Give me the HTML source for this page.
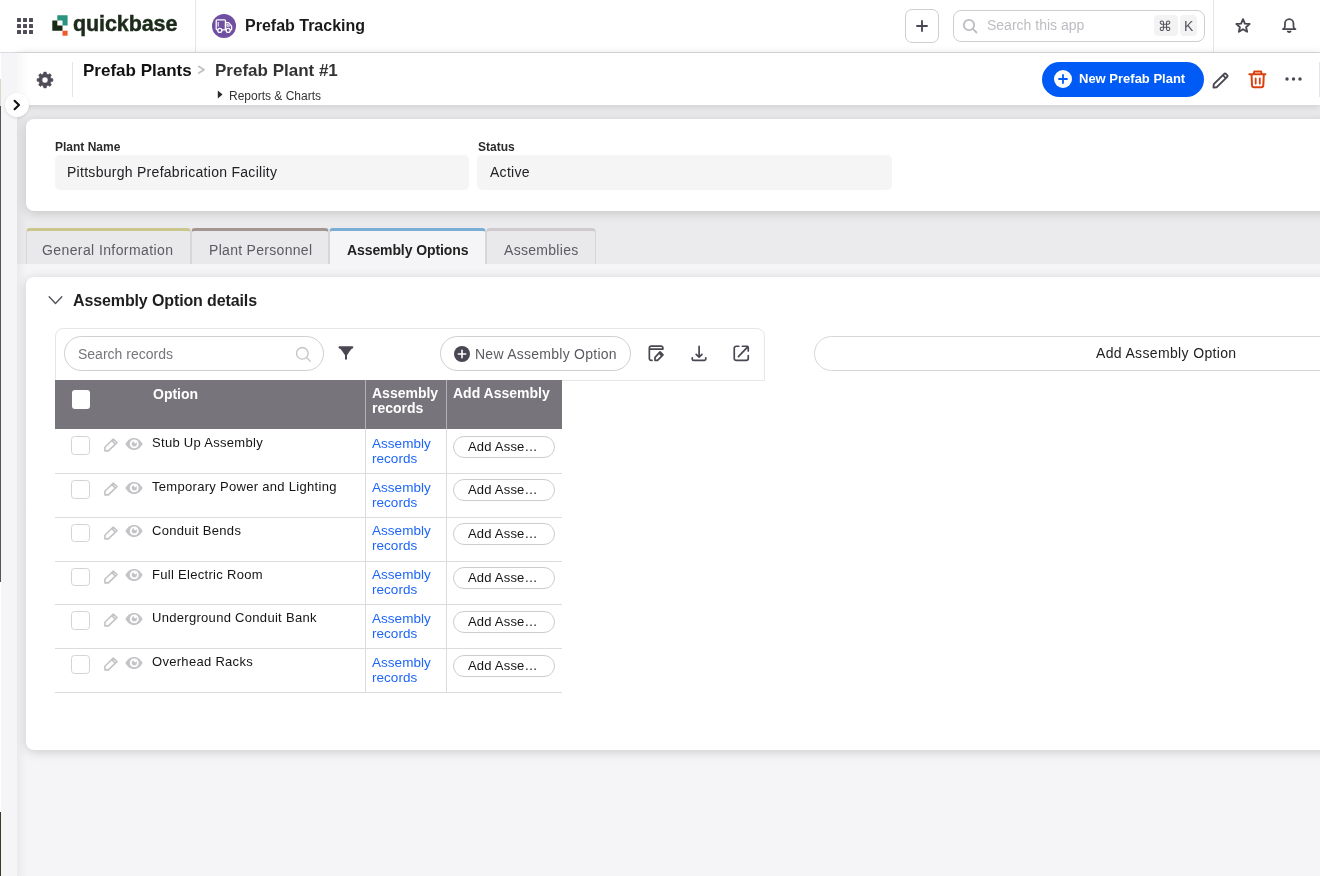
<!DOCTYPE html>
<html><head><meta charset="utf-8">
<style>
*{box-sizing:border-box;margin:0;padding:0}
html,body{width:1320px;height:876px;overflow:hidden}
body{position:relative;background:#f5f5f8;font-family:"Liberation Sans",sans-serif;color:#222}
.a{position:absolute}
.t{position:absolute;white-space:nowrap;line-height:1;will-change:transform}
#top{left:0;top:0;width:1320px;height:53px;background:#fff;border-bottom:1px solid #dcdce0}
#side{left:0;top:53px;width:17px;height:823px;background:#f5f5f8;border-left:1px solid #fff}
#shade{left:17px;top:105px;width:10px;height:771px;background:linear-gradient(to right,rgba(0,0,0,.045),rgba(0,0,0,0))}
#hdr{left:17px;top:53px;width:1303px;height:52.3px;background:#fff;box-shadow:0 1px 8px rgba(0,0,0,.16)}
#upper{left:17px;top:105px;width:1303px;height:159px;background:#ebebed}
.card{background:#fff;border-radius:8px;box-shadow:0 2px 11px rgba(0,0,0,.17)}
.tab{top:228px;height:36px;background:#e9e9eb;border-top:3px solid;border-left:1px solid #d6d6da;border-right:1px solid #d6d6da;border-radius:4px 4px 0 0}
.tab.act{background:#f5f5f7}
.cb{left:71px;width:18.5px;height:18.5px;border:1px solid #d4d4d8;border-radius:3.5px;background:#fff}
.pen{left:103px;width:16px;height:16px}
.eye{left:125px;width:18px;height:12px}
.rt{left:152.3px;font-size:13px;letter-spacing:.3px;color:#151515}
.lk{left:372.4px;font-size:13.5px;letter-spacing:.03px;line-height:14.6px;color:#1d66f7}
.btn{left:452.8px;width:102px;height:22px;border:1px solid #cdcdd1;border-radius:12px;background:#fff}
.bt{left:468px;font-size:13px;letter-spacing:.2px;color:#151515}
</style></head>
<body>
<!-- upper gray band -->
<div class="a" id="upper"></div>
<div class="a" id="shade"></div>

<!-- top bar -->
<div class="a" id="top">
  <!-- grid -->
  <svg class="a" style="left:17px;top:18px" width="16" height="16" viewBox="0 0 16 16" fill="#504c58">
    <rect x="0" y="0" width="4" height="4" rx=".5"/><rect x="6" y="0" width="4" height="4" rx=".5"/><rect x="12" y="0" width="4" height="4" rx=".5"/>
    <rect x="0" y="6" width="4" height="4" rx=".5"/><rect x="6" y="6" width="4" height="4" rx=".5"/><rect x="12" y="6" width="4" height="4" rx=".5"/>
    <rect x="0" y="12" width="4" height="4" rx=".5"/><rect x="6" y="12" width="4" height="4" rx=".5"/><rect x="12" y="12" width="4" height="4" rx=".5"/>
  </svg>
  <!-- logo -->
  <svg class="a" style="left:52px;top:15px" width="16" height="21" viewBox="0 0 16 21">
    <path d="M5.3 0.3H15.6V10.6H10.5V5.5H5.3Z" fill="#2a9480"/>
    <path d="M0.3 5.5H5.3V10.6H10.5V15.7H0.3Z" fill="#1b2a17"/>
    <rect x="10.5" y="15.7" width="5.1" height="5" fill="#f05a28"/>
  </svg>
  <div class="t" style="left:73px;top:14px;font-size:21.5px;font-weight:700;color:#1c2b1a;letter-spacing:-.1px;-webkit-text-stroke:.45px #1c2b1a">quickbase</div>
  <div class="a" style="left:195px;top:0;width:1px;height:52px;background:#e6e6e8"></div>
  <!-- app icon -->
  <svg class="a" style="left:212px;top:13.8px" width="24" height="24" viewBox="0 0 24 24"><circle cx="12" cy="12" r="12" fill="#6f4fa0"/>
  <g fill="none" stroke="#fff" stroke-width="1.3" stroke-linejoin="round"><rect x="4.2" y="5.8" width="9.3" height="10" rx="1"/><path d="M6.2 8V12.5" stroke-width="1"/><path d="M13.5 8.6H16.6L19.6 12.2V15.8H13.5Z"/><path d="M15 10.3H16.1L17.6 12.2H15Z" stroke-width=".9"/></g>
  <g fill="#6f4fa0" stroke="#fff" stroke-width="1.3"><circle cx="7.8" cy="16.4" r="2"/><circle cx="16.2" cy="16.4" r="2"/></g></svg>
  <div class="t" style="left:244.5px;top:18px;font-size:16px;font-weight:700;color:#1a1a1a">Prefab Tracking</div>
  <!-- plus button -->
  <div class="a" style="left:904.5px;top:9px;width:34px;height:34px;border:1px solid #cfcfd3;border-radius:7px"></div>
  <!-- search -->
  <div class="a" style="left:953px;top:10px;width:252px;height:32px;border:1px solid #cfcfd3;border-radius:8px"></div>
  <div class="t" style="left:986.5px;top:18.3px;font-size:14px;color:#bdbcc2">Search this app</div>
  <svg class="a" style="left:914px;top:18px" width="16" height="16" viewBox="0 0 16 16"><path d="M8 3V13M3 8H13" stroke="#4a4652" stroke-width="1.85" stroke-linecap="round"/></svg>
  <svg class="a" style="left:962px;top:18px" width="16" height="16" viewBox="0 0 16 16" fill="none" stroke="#bdbcc2" stroke-width="1.8" stroke-linecap="round"><circle cx="7" cy="7" r="5.2"/><path d="M10.8 10.8L14.5 14.5"/></svg>
  <div class="a" style="left:1153.5px;top:15px;width:24px;height:21px;border-radius:4px;background:#f3f3f4"></div>
  <div class="a" style="left:1180px;top:15px;width:16.5px;height:21px;border-radius:4px;background:#f3f3f4"></div>
  <div class="t" style="left:1158px;top:19px;font-size:14px;color:#55535b">&#8984;</div>
  <div class="t" style="left:1183.5px;top:19px;font-size:14px;color:#55535b">K</div>
  <div class="a" style="left:1213px;top:0;width:1px;height:52px;background:#e6e6e8"></div>
  <svg class="a" style="left:1234px;top:17px" width="18" height="18" viewBox="0 0 18 18"><path d="M9 2.2L10.9 6.6L15.6 7L12.1 10.1L13.1 14.8L9 12.3L4.9 14.8L5.9 10.1L2.4 7L7.1 6.6Z" fill="none" stroke="#4a4652" stroke-width="1.9" stroke-linejoin="round"/></svg>
  <svg class="a" style="left:1280px;top:16.3px" width="18" height="18" viewBox="0 0 18 18" fill="none" stroke="#4a4652" stroke-width="1.75" stroke-linecap="round" stroke-linejoin="round"><path d="M2.9 13.1H15.5M3.4 13.1Q4.95 12.4 4.95 10V7.4A4.25 4.25 0 0 1 13.45 7.4V10Q13.45 12.4 15 13.1"/><path d="M7.9 15.6Q9.2 16.6 10.5 15.6" stroke-width="1.9"/></svg>
</div>

<!-- sidebar -->


<!-- page header -->
<div class="a" id="hdr">
  <svg class="a" style="left:17.8px;top:16.6px" width="20" height="20" viewBox="0 0 20 20"><path fill="#4f4b57" fill-rule="evenodd" stroke="#4f4b57" stroke-width=".6" stroke-linejoin="round" d="M8.40 4.00 L8.85 2.10 L11.15 2.10 L11.60 4.00 A6.00 6.00 0 0 1 13.11 4.63 L14.77 3.60 L16.40 5.23 L15.37 6.89 A6.00 6.00 0 0 1 16.00 8.40 L17.90 8.85 L17.90 11.15 L16.00 11.60 A6.00 6.00 0 0 1 15.37 13.11 L16.40 14.77 L14.77 16.40 L13.11 15.37 A6.00 6.00 0 0 1 11.60 16.00 L11.15 17.90 L8.85 17.90 L8.40 16.00 A6.00 6.00 0 0 1 6.89 15.37 L5.23 16.40 L3.60 14.77 L4.63 13.11 A6.00 6.00 0 0 1 4.00 11.60 L2.10 11.15 L2.10 8.85 L4.00 8.40 A6.00 6.00 0 0 1 4.63 6.89 L3.60 5.23 L5.23 3.60 L6.89 4.63 A6.00 6.00 0 0 1 8.40 4.00 Z M13.10 10.00 A3.10 3.10 0 1 0 6.90 10.00 A3.10 3.10 0 1 0 13.10 10.00 Z"/></svg>
  <div class="a" style="left:55px;top:9px;width:1px;height:35px;background:#e4e4e7"></div>
  <div class="t" style="left:65.5px;top:9px;font-size:17px;font-weight:700;color:#111">Prefab Plants</div>
  <svg class="a" style="left:180px;top:12px" width="10" height="10" viewBox="0 0 10 10"><path d="M1.8 1.5L7 4.7L1.8 8" fill="none" stroke="#c2c2c4" stroke-width="1.9" stroke-linecap="round" stroke-linejoin="round"/></svg>
  <div class="t" style="left:198px;top:9px;font-size:17px;font-weight:700;color:#333">Prefab Plant #1</div>
  <svg class="a" style="left:200px;top:37px" width="6" height="9" viewBox="0 0 6 9"><path d="M0.8 0.5L5.5 4.5L0.8 8.5Z" fill="#2a2a2a"/></svg>
  <div class="t" style="left:211.5px;top:36.5px;font-size:12px;color:#333">Reports &amp; Charts</div>
  <!-- new button -->
  <div class="a" style="left:1025px;top:9px;width:162px;height:34.5px;border-radius:18px;background:#005bf6"></div>
  <svg class="a" style="left:1037px;top:17.3px" width="18" height="18" viewBox="0 0 18 18"><circle cx="9" cy="9" r="9" fill="#fff"/><path d="M9 5V13M5 9H13" stroke="#005bf6" stroke-width="1.8" stroke-linecap="round"/></svg>
  <div class="t" style="left:1062px;top:18.5px;font-size:13px;font-weight:700;color:#fff">New Prefab Plant</div>
  <!-- pencil -->
  <svg class="a" style="left:1194px;top:16.5px" width="20" height="20" viewBox="0 0 20 20" fill="none" stroke="#4a4652" stroke-width="1.9" stroke-linejoin="round"><path d="M2.5 17.5L2.8 14.2L13.2 3.8A1.2 1.2 0 0 1 14.9 3.8L16.2 5.1A1.2 1.2 0 0 1 16.2 6.8L5.8 17.2Z"/><path d="M11.8 5.2L14.8 8.2"/></svg>
  <!-- trash -->
  <svg class="a" style="left:1231px;top:15.5px" width="20" height="20" viewBox="0 0 20 20" fill="none" stroke="#d9420f" stroke-width="2" stroke-linecap="round" stroke-linejoin="round"><path d="M1.3 5.3H17.4M5.6 5.3L6.3 2.4H13.1L13.8 5.3M3.5 5.3L4 16.3Q4.1 18.3 6 18.3H13.3Q15.2 18.3 15.3 16.3L15.8 5.3"/><path d="M7.7 9.3V14.7M11.8 9.3V14.7" stroke-width="1.8"/></svg>
  <!-- dots -->
  <svg class="a" style="left:1268px;top:24px" width="18" height="4" viewBox="0 0 18 4" fill="#4a4652"><circle cx="2" cy="2" r="1.7"/><circle cx="8.5" cy="2" r="1.7"/><circle cx="15" cy="2" r="1.7"/></svg>
  <div class="a" style="left:1302px;top:8.5px;width:1px;height:35px;background:#e4e4e7"></div>
</div>

<div class="a" id="side"></div>
<div class="a" style="left:0;top:79px;width:1px;height:27px;background:#d9d5ca"></div>
<div class="a" style="left:0;top:106px;width:1px;height:476px;background:#555"></div>
<div class="a" style="left:0;top:812px;width:1px;height:64px;background:#3b3a26"></div>
<div class="a" style="left:17px;top:53px;width:12px;height:52px;background:linear-gradient(to right,rgba(0,0,0,.03),rgba(0,0,0,0))"></div>
<!-- card 1 -->
<div class="a card" style="left:26px;top:119px;width:1320px;height:92px"></div>
<div class="t" style="left:55px;top:140.7px;font-size:12px;font-weight:700;color:#2b2b2b">Plant Name</div>
<div class="a" style="left:54.5px;top:155px;width:414.5px;height:35px;border-radius:5px;background:#f5f5f5"></div>
<div class="t" style="left:67px;top:165px;font-size:14px;letter-spacing:.28px;color:#222226">Pittsburgh Prefabrication Facility</div>
<div class="t" style="left:477.5px;top:140.7px;font-size:12px;font-weight:700;color:#2b2b2b">Status</div>
<div class="a" style="left:477px;top:155px;width:415px;height:35px;border-radius:5px;background:#f5f5f5"></div>
<div class="t" style="left:489.5px;top:165px;font-size:14px;letter-spacing:.28px;color:#222226">Active</div>

<!-- tabs -->
<div class="a tab" style="left:26px;width:165px;border-top-color:#c9c78c"></div>
<div class="a tab" style="left:191px;width:138px;border-top-color:#a39592"></div>
<div class="a tab act" style="left:329px;width:157px;border-top-color:#7aaed4"></div>
<div class="a tab" style="left:486px;width:110px;border-top-color:#d0cacc"></div>
<div class="t" style="left:42.3px;top:243.3px;font-size:14px;letter-spacing:.4px;color:#5c5a62">General Information</div>
<div class="t" style="left:208.5px;top:243.3px;font-size:14px;letter-spacing:.3px;color:#5c5a62">Plant Personnel</div>
<div class="t" style="left:346.8px;top:243.3px;font-size:14px;font-weight:700;letter-spacing:-.1px;color:#222">Assembly Options</div>
<div class="t" style="left:503.6px;top:243.3px;font-size:14px;letter-spacing:.3px;color:#5c5a62">Assemblies</div>

<!-- card 2 -->
<div class="a card" style="left:26px;top:277px;width:1320px;height:473px"></div>
<svg class="a" style="left:48px;top:295px" width="15" height="10" viewBox="0 0 15 10"><path d="M1.2 1.8L7.5 8.5L13.8 1.8" fill="none" stroke="#55535b" stroke-width="1.4" stroke-linecap="round" stroke-linejoin="round"/></svg>
<div class="t" style="left:73px;top:293px;font-size:16px;font-weight:700;letter-spacing:-.12px;color:#1e1e1e">Assembly Option details</div>

<!-- toolbar container -->
<div class="a" style="left:54.5px;top:327.5px;width:710.5px;height:53px;border:1px solid #e6e6e8;border-radius:8px 8px 0 0"></div>
<div class="a" style="left:64.4px;top:336.4px;width:259.6px;height:35px;border:1px solid #cfcfd3;border-radius:18px"></div>
<div class="t" style="left:77.7px;top:346.5px;font-size:14px;color:#77757c">Search records</div>
<svg class="a" style="left:295px;top:346px" width="17" height="17" viewBox="0 0 17 17" fill="none" stroke="#c4c4c8" stroke-width="1.3" stroke-linecap="round"><circle cx="7.3" cy="7.3" r="5.8"/><path d="M11.5 11.5L15.3 15.3"/></svg>
<svg class="a" style="left:338px;top:345.5px" width="16" height="15" viewBox="0 0 16 15"><path d="M0.5 1.2Q0.5 0.3 1.4 0.3H14.4Q15.3 0.3 15.3 1.2Q15.3 2 14.5 2.5L13.4 3.1Q11 6.2 9 9.3V13Q9 13.7 8 13.7Q7 13.7 7 13V9.3Q5 6.2 2.5 3.1L1.3 2.5Q0.5 2 0.5 1.2Z" fill="#4a4652"/></svg>
<div class="a" style="left:440.3px;top:336.2px;width:190.4px;height:35px;border:1px solid #cfcfd3;border-radius:18px"></div>
<svg class="a" style="left:453.8px;top:346px" width="16" height="16" viewBox="0 0 16 16"><circle cx="8" cy="8" r="8" fill="#4a4652"/><path d="M8 4.3V11.7M4.3 8H11.7" stroke="#fff" stroke-width="1.6" stroke-linecap="round"/></svg>
<div class="t" style="left:475.4px;top:347px;font-size:14px;letter-spacing:.26px;color:#5c5a62">New Assembly Option</div>
<svg class="a" style="left:647px;top:345.3px" width="18" height="18" viewBox="0 0 18 18" fill="none" stroke="#4a4652" stroke-width="1.7" stroke-linecap="round" stroke-linejoin="round"><path d="M5 15.35H4.2A1.85 1.85 0 0 1 2.35 13.5V3A1.85 1.85 0 0 1 4.2 1.15H14A1.85 1.85 0 0 1 15.85 3V4.15H2.35"/><path d="M8 15.35V12.4L13.1 6.9L16 9.8L10.5 15.35Z M12 8L14.9 10.9"/></svg>
<svg class="a" style="left:690px;top:345.4px" width="18" height="18" viewBox="0 0 18 18" fill="none" stroke="#4a4652" stroke-width="1.7" stroke-linecap="round" stroke-linejoin="round"><path d="M9.1 1.4V12M6.2 9.3L9.1 12.2L12 9.3M2.25 12.8V13.9A1.55 1.55 0 0 0 3.8 15.45H14.2A1.55 1.55 0 0 0 15.75 13.9V12.8"/></svg>
<svg class="a" style="left:732px;top:345.4px" width="18" height="18" viewBox="0 0 18 18" fill="none" stroke="#4a4652" stroke-width="1.7" stroke-linecap="round" stroke-linejoin="round"><path d="M6.8 1.25H4.2A1.95 1.95 0 0 0 2.25 3.2V13.5A1.95 1.95 0 0 0 4.2 15.45H14.3A1.95 1.95 0 0 0 16.25 13.5V10.7M10.4 1.25H15A1.25 1.25 0 0 1 16.25 2.5V5.9M15.9 1.6L6.4 11.6"/></svg>

<!-- wide add button -->
<div class="a" style="left:813.5px;top:335.5px;width:706px;height:35.7px;border:1px solid #d8d8dc;border-radius:18px"></div>
<div class="t" style="left:1096.4px;top:346.3px;font-size:14px;letter-spacing:.35px;color:#222">Add Assembly Option</div>

<!-- table -->
<div class="a" style="left:54.5px;top:380px;width:507.5px;height:49px;background:#78747c"></div>
<div class="a" style="left:365px;top:380px;width:1px;height:49px;background:#b3b0b7"></div>
<div class="a" style="left:446px;top:380px;width:1px;height:49px;background:#b3b0b7"></div>
<div class="a" style="left:72px;top:390px;width:18px;height:18.5px;border-radius:3px;background:#fff"></div>
<div class="t" style="left:152.8px;top:386.5px;font-size:14px;font-weight:700;color:#fff">Option</div>
<div class="t" style="left:371.7px;top:386.4px;font-size:14px;font-weight:700;color:#fff;line-height:15.3px;white-space:normal;width:70px">Assembly records</div>
<div class="t" style="left:453.3px;top:386.4px;font-size:14px;font-weight:700;color:#fff">Add Assembly</div>
<svg width="0" height="0" style="position:absolute"><defs>
<symbol id="pen" viewBox="0 0 16 16"><path d="M1.9 13.9V10.3L10.3 2L14 5.6L5.4 13.9Z M8.8 3.6L12.4 7.1" fill="none" stroke="#c4c4c8" stroke-width="1.6" stroke-linejoin="round"/></symbol>
<symbol id="eye" viewBox="0 0 18 12"><path d="M0.3 6C3 1.5 6 0 9 0S15 1.5 17.7 6C15 10.5 12 12 9 12S3 10.5 0.3 6Z" fill="#c4c4c8"/><circle cx="9.25" cy="5.9" r="4.45" fill="#fff"/><circle cx="9.3" cy="5.8" r="2.6" fill="#c4c4c8"/><circle cx="10.1" cy="4.1" r="1.25" fill="#fff"/></symbol>
</defs></svg>
<!--ROWS-->
<div class="a" style="left:365px;top:429px;width:1px;height:264px;background:#dcdcde"></div>
<div class="a" style="left:446px;top:429px;width:1px;height:264px;background:#dcdcde"></div>
<div class="a" style="left:54.5px;top:473.00px;width:507.5px;height:1px;background:#dcdcde"></div>
<div class="a cb" style="top:436.20px"></div>
<svg class="a pen" style="margin-top:-.2px;top:437.30px"><use href="#pen"/></svg>
<svg class="a eye" style="margin-top:-.6px;top:438.30px"><use href="#eye"/></svg>
<div class="t rt" style="top:436.10px">Stub Up Assembly</div>
<div class="t lk" style="top:436.70px">Assembly<br>records</div>
<div class="a btn" style="top:435.50px"></div>
<div class="t bt" style="top:439.50px">Add Asse&#8230;</div>
<div class="a" style="left:54.5px;top:516.78px;width:507.5px;height:1px;background:#dcdcde"></div>
<div class="a cb" style="top:480.00px"></div>
<svg class="a pen" style="margin-top:-.2px;top:481.10px"><use href="#pen"/></svg>
<svg class="a eye" style="margin-top:-.6px;top:482.10px"><use href="#eye"/></svg>
<div class="t rt" style="top:479.90px">Temporary Power and Lighting</div>
<div class="t lk" style="top:480.50px">Assembly<br>records</div>
<div class="a btn" style="top:479.30px"></div>
<div class="t bt" style="top:483.30px">Add Asse&#8230;</div>
<div class="a" style="left:54.5px;top:560.56px;width:507.5px;height:1px;background:#dcdcde"></div>
<div class="a cb" style="top:523.80px"></div>
<svg class="a pen" style="margin-top:-.2px;top:524.90px"><use href="#pen"/></svg>
<svg class="a eye" style="margin-top:-.6px;top:525.90px"><use href="#eye"/></svg>
<div class="t rt" style="top:523.70px">Conduit Bends</div>
<div class="t lk" style="top:524.30px">Assembly<br>records</div>
<div class="a btn" style="top:523.10px"></div>
<div class="t bt" style="top:527.10px">Add Asse&#8230;</div>
<div class="a" style="left:54.5px;top:604.34px;width:507.5px;height:1px;background:#dcdcde"></div>
<div class="a cb" style="top:567.60px"></div>
<svg class="a pen" style="margin-top:-.2px;top:568.70px"><use href="#pen"/></svg>
<svg class="a eye" style="margin-top:-.6px;top:569.70px"><use href="#eye"/></svg>
<div class="t rt" style="top:567.50px">Full Electric Room</div>
<div class="t lk" style="top:568.10px">Assembly<br>records</div>
<div class="a btn" style="top:566.90px"></div>
<div class="t bt" style="top:570.90px">Add Asse&#8230;</div>
<div class="a" style="left:54.5px;top:648.12px;width:507.5px;height:1px;background:#dcdcde"></div>
<div class="a cb" style="top:611.40px"></div>
<svg class="a pen" style="margin-top:-.2px;top:612.50px"><use href="#pen"/></svg>
<svg class="a eye" style="margin-top:-.6px;top:613.50px"><use href="#eye"/></svg>
<div class="t rt" style="top:611.30px">Underground Conduit Bank</div>
<div class="t lk" style="top:611.90px">Assembly<br>records</div>
<div class="a btn" style="top:610.70px"></div>
<div class="t bt" style="top:614.70px">Add Asse&#8230;</div>
<div class="a" style="left:54.5px;top:691.90px;width:507.5px;height:1px;background:#dcdcde"></div>
<div class="a cb" style="top:655.20px"></div>
<svg class="a pen" style="margin-top:-.2px;top:656.30px"><use href="#pen"/></svg>
<svg class="a eye" style="margin-top:-.6px;top:657.30px"><use href="#eye"/></svg>
<div class="t rt" style="top:655.10px">Overhead Racks</div>
<div class="t lk" style="top:655.70px">Assembly<br>records</div>
<div class="a btn" style="top:654.50px"></div>
<div class="t bt" style="top:658.50px">Add Asse&#8230;</div>
<!--/ROWS-->
<div class="a" style="left:5px;top:93px;width:24px;height:24px;border-radius:50%;background:#fff;box-shadow:0 1px 3px rgba(0,0,0,.12)"></div>
<svg class="a" style="left:12px;top:99px" width="10" height="12" viewBox="0 0 10 12"><path d="M2.6 1.8L7 6L2.6 10.2" fill="none" stroke="#111" stroke-width="2.1" stroke-linecap="round" stroke-linejoin="round"/></svg>
</body></html>
